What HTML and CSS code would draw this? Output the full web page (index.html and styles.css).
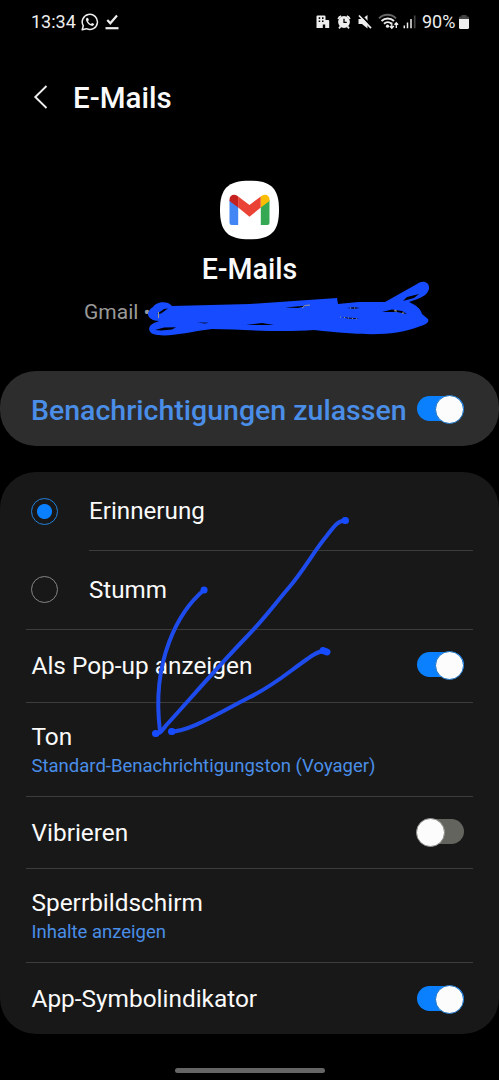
FILE: index.html
```html
<!DOCTYPE html>
<html lang="de">
<head>
  <meta charset="UTF-8">
  <meta name="viewport" content="width=device-width, initial-scale=1.0">
  <title>E-Mails</title>
  <link rel="stylesheet" href="styles.css">
</head>
<body>

<div class="status">
  <span class="time">13:34</span>
  <svg class="whatsapp" width="18" height="18" viewBox="0 0 18 18" fill="none">
    <path d="M1.2 16.8l1.1-4A7.6 7.6 0 1 1 5.4 15.700z" stroke="#eee" stroke-width="1.5" stroke-linejoin="round"/>
    <path d="M6 4.700c-1 .6-1.300 1.700-.8 3 1 2.500 2.800 4.300 5.300 5.100 1.300.4 2.500-.4 2.700-1.700l-2.100-1.200-1.200 1.100C8.400 10.300 7.500 9.300 7 8.200l.9-1.100-.9-2.200z" fill="#eee"/>
  </svg>
  <svg class="check" width="14" height="16" viewBox="0 0 14 16" fill="none" stroke="#eee">
    <path d="M2.300 6l3 3.300L12 1.500" stroke-width="2.200"/>
    <path d="M.5 14.200h13" stroke-width="2.200"/>
  </svg>
  <div class="status-right">
    <svg width="103" height="18" viewBox="315 13 103 18">
      <!-- Gebäude -->
      <path fill="#eee" fill-rule="evenodd" d="M317.500 15.500h7q1 0 1 1v3.500h2.700q1 0 1 1v7h-4v-3.500h-2.400v3.500h-6.300V16.500q0-1 1-1zM318.700 17.300v1.600h1.500v-1.600zM322 17.300v1.600h1.500v-1.600zM318.700 20.500v1.600h1.500v-1.600zM322 20.500v1.600h1.500v-1.600z"/>
      <!-- Wecker -->
      <circle cx="344" cy="22" r="5.900" fill="#eee"/>
      <path d="M338.200 19a5 5 0 0 1 3-3M346.800 16a5 5 0 0 1 3 3M340.500 26.500l-1.500 1.800M347.500 26.500l1.500 1.800" stroke="#eee" stroke-width="1.800" fill="none"/>
      <path d="M344 18.700v3.700h2.800" stroke="#000" stroke-width="1.300" fill="none"/>
      <!-- Stumm -->
      <path d="M358.500 19h3.500l5.500-4v13.500l-5.500-4.500h-3.500z" fill="#eee"/>
      <path d="M360 14.300l12 12.500" stroke="#000" stroke-width="2"/>
      <path d="M359 15.500l12 12.700" stroke="#eee" stroke-width="1.700"/>
      <!-- WLAN -->
      <g fill="none" stroke-width="1.900">
        <path d="M379 18.300a12 12 0 0 1 17 0" stroke="#666"/>
        <path d="M381.500 21a9 9 0 0 1 12.500 0M384 23.800a5.500 5.500 0 0 1 7.500 0" stroke="#eee"/>
      </g>
      <circle cx="387.500" cy="26.200" r="1.600" fill="#eee"/>
      <path d="M391.800 22.500v5.500M389.800 26l2 2.200 2-2.200M396.300 28v-5M394.500 24.800l1.800-2 1.800 2" stroke="#eee" stroke-width="1.300" fill="none"/>
      <!-- Empfang -->
      <path d="M404.300 25.500v2.800M407.500 22.500v5.800M411 19v9.300" stroke="#eee" stroke-width="1.500"/>
      <path d="M414.700 15.500v12.800" stroke="#444" stroke-width="1.700"/>
    </svg>
    <span class="percent">90%</span>
    <svg width="10" height="15" viewBox="0 0 10 15">
      <path d="M0 4V2.500q0-1 1-1h1.500V0h5v1.500H9q1 0 1 1V4z" fill="#444"/>
      <path d="M0 4h10v8.500q0 1.500-1.500 1.500h-7Q0 14 0 12.500z" fill="#eee"/>
    </svg>
  </div>
</div>

<div class="header">
  <svg width="16" height="26" viewBox="0 0 16 26" fill="none">
    <path d="M13.500 2L2.300 13l11.200 11" stroke="#eee" stroke-width="1.900"/>
  </svg>
  <h1>E-Mails</h1>
</div>

<div class="app">
  <svg class="app-icon" width="60" height="60" viewBox="0 0 60 60">
    <path d="M29.500.7C51 .7 59 8.300 59 30s-8 29.300-29.500 29.300S0 51.700 0 30 8 .7 29.500.7z" fill="#fff"/>
    <path d="M9.500 20l8.700 6.500V45h-6.500q-2.200 0-2.200-2.200z" fill="#4285f4"/>
    <path d="M49.500 20l-8.700 6.500V45h6.500q2.200 0 2.200-2.200z" fill="#34a853"/>
    <path d="M18.200 16.500L29.500 25l11.300-8.500v11L29.500 36.800l-11.300-9.300z" fill="#ea4335"/>
    <path d="M9.500 19.500c0-4.200 4.500-6.200 8-3.500l.7.500v11L9.500 21z" fill="#c5221f"/>
    <path d="M49.500 19.500c0-4.200-4.500-6.200-8-3.500l-.7.500v11L49.500 21z" fill="#fbbc04"/>
  </svg>
  <h2>E-Mails</h2>
  <p>Gmail •</p>
</div>

<div class="allow">
  <span>Benachrichtigungen zulassen</span>
  <i class="switch on"></i>
</div>

<div class="card">
  <div class="row radio-row">
    <i class="radio checked"></i>
    <span class="label">Erinnerung</span>
  </div>
  <div class="row radio-row last">
    <i class="radio"></i>
    <span class="label">Stumm</span>
  </div>
  <div class="row popup">
    <span class="label">Als Pop-up anzeigen</span>
    <i class="switch on"></i>
  </div>
  <div class="row double">
    <span class="label">Ton<small>Standard-Benachrichtigungston (Voyager)</small></span>
  </div>
  <div class="row vibrate">
    <span class="label">Vibrieren</span>
    <i class="switch"></i>
  </div>
  <div class="row double">
    <span class="label">Sperrbildschirm<small>Inhalte anzeigen</small></span>
  </div>
  <div class="row">
    <span class="label">App-Symbolindikator</span>
    <i class="switch on"></i>
  </div>
</div>

<div class="home-bar"></div>

<!-- Stiftmarkierungen über der Seite -->
<svg class="ink" width="499" height="1080" viewBox="0 0 499 1080">
  <path class="fill" d="M153 307c3-5 14-7 19-1l78-2 87-6 1 6 20-2h27l32-18c8-6 16 1 10 9-3 4-10 6-18 9 7 3 12 7 13 12l6 5c2 4-4 6-10 8-25 9-50 9-104 3-38 3-72-1-102-1-24 3-42 8-54 6-11-1-11-9-4-12l5-2c-7 0-12-4-11-8 1-3 3-5 5-6z"/>
  <path class="gap" d="M157 314l7-5 4-.5-7 5zM155 330l9-2.500 12-.3-4 2.300-11 1zM403 301l4-4 12-3-5 4zM285 307.500l23-2-10 2.500zM197 322.500l12 .2-4 .8zM246 325l16-2 12 2zM382 312l10-2.500 10 1.500 5 3-10-2zM347 308l7-.7 6 .7-6 .7zM341 317.300l14 .7 4 1-11-.5z"/>
  <path class="rest" d="M158.500 312v6M302 308l3-2.500 5-.5M394 311l2-1v2M402 313h2"/>
  <path class="rest dotted" d="M350 308h8M340 317l18 2"/>
  <path class="line" d="M204 590C179 611 151 660 160 731"/>
  <path class="line" d="M155 733.500c5 1 7-3 11-8 28-31 53-60 80-88 17-17 30-35 43-50 16-19 24-35 38-52 7-9 11-15 18-15"/>
  <path class="line" d="M171 731.500c18 0 45-17 78-34 25-12 40-26 59-39 8-6 14-9 19-6"/>
  <path class="dot" d="M345 520.500h.5M204 590h.1M155.500 733.500h.5M171.500 731.500h.5M323 650.500l4 1.500"/>
</svg>

</body>
</html>
```
FILE: styles.css
```css
* {
  margin: 0;
  padding: 0;
  box-sizing: border-box;
}
body {
  font-family: Roboto, sans-serif;
  background-color: #000;
  color: #fafafa;
  width: 499px;
  height: 1080px;
  position: relative;
  overflow: hidden;
}
svg {
  display: block;
  flex-shrink: 0;
}
.status {
  display: flex;
  align-items: center;
  height: 44px;
  padding: 0 30px 0 31px;
  color: #eee;
}
.time {
  font-size: 18px;
  width: 50px;
  margin-top: -1px;
}
.check {
  margin-left: 6px;
}
.status-right {
  display: flex;
  align-items: center;
  margin-left: auto;
}
.percent {
  width: 37px;
  margin: -1px 0 0 4px;
  font-size: 18px;
}
.header {
  display: flex;
  align-items: center;
  height: 106px;
  padding-left: 33px;
}
.header h1 {
  margin-left: 24px;
  font-size: 29.5px;
  font-weight: 500;
  line-height: 36px;
  padding-top: 1px;
}
.app {
  display: flex;
  flex-direction: column;
  align-items: center;
  height: 221px;
  padding-top: 30px;
}
.app h2 {
  margin-top: 12px;
  font-size: 28.6px;
  font-weight: 500;
  line-height: 34px;
}
.app p {
  align-self: flex-start;
  margin: 13px 0 0 84px;
  font-size: 21px;
  line-height: 26px;
  color: #999;
}
.allow {
  display: flex;
  align-items: center;
  justify-content: space-between;
  height: 75px;
  padding: 0 35px 0 31px;
  border-radius: 36px;
  background-color: #2d2d2d;
  color: #4a8ee8;
  font-size: 28.5px;
  font-weight: 500;
}
.allow span {
  padding-top: 3px;
}
.allow .switch {
  margin-bottom: 1px;
}
.card {
  margin-top: 26px;
  padding: 0 26px;
  height: 562px;
  border-radius: 36px;
  background-color: #181818;
}
.row {
  display: flex;
  align-items: center;
  justify-content: space-between;
  height: 73px;
  padding: 0 9px 0 5.500px;
  border-bottom: 1px solid #3c3c3c;
}
.row:last-child {
  height: 71px;
  border-bottom: none;
}
.row:last-child .switch {
  margin-bottom: 1px;
}
.double {
  height: 94px;
  padding-top: 2px;
}
.vibrate {
  height: 72px;
}
.popup .switch {
  margin-bottom: 3px;
}
.vibrate .switch {
  margin-bottom: 2px;
}
.radio-row {
  justify-content: flex-start;
  height: 79px;
  padding-left: 5px;
  border-bottom: none;
}
.radio-row .label {
  display: flex;
  align-items: center;
  flex: 1;
  height: 100%;
  margin: 0 -9px 0 31px;
  font-size: 24.2px;
  border-bottom: 1px solid #3c3c3c;
}
.radio-row.last {
  border-bottom: 1px solid #3c3c3c;
}
.radio-row.last .label {
  border-bottom: none;
}
.label {
  font-size: 24.4px;
  line-height: 30px;
}
.label small {
  display: block;
  font-size: 18.5px;
  line-height: 28px;
  color: #4a8ee8;
}
.radio {
  width: 27px;
  height: 27px;
  margin-bottom: 1px;
  border: 1px solid #858585;
  border-radius: 50%;
}
.radio.checked {
  border-color: #2481da;
  background: radial-gradient(circle, #0a80ff 7px, transparent 8px);
}
.switch {
  position: relative;
  width: 47px;
  height: 25px;
  flex-shrink: 0;
  border-radius: 13px;
  background-color: #64645f;
}
.switch::after {
  content: "";
  position: absolute;
  left: -1px;
  top: -1px;
  width: 27px;
  height: 27px;
  border: 1px solid #8c8c89;
  border-radius: 50%;
  background-color: #fcfcfc;
}
.switch.on {
  background-color: #0a80ff;
}
.switch.on::after {
  left: auto;
  right: 0;
  border-color: #156fc5;
}
.home-bar {
  width: 150px;
  height: 5px;
  margin: 34px auto 0;
  border-radius: 3px;
  background-color: #656565;
}
.ink {
  position: absolute;
  left: 0;
  top: 0;
  pointer-events: none;
}
.ink .fill {
  fill: #174bff;
}
.ink .gap {
  fill: #000;
}
.ink .rest {
  fill: none;
  stroke: #999;
  stroke-width: 1;
}
.ink .dotted {
  stroke-dasharray: 1 3;
}
.ink .line {
  fill: none;
  stroke: #1e4bec;
  stroke-width: 4;
  stroke-linecap: round;
}
.ink .dot {
  stroke: #174bff;
  stroke-width: 7;
  stroke-linecap: round;
}
```
